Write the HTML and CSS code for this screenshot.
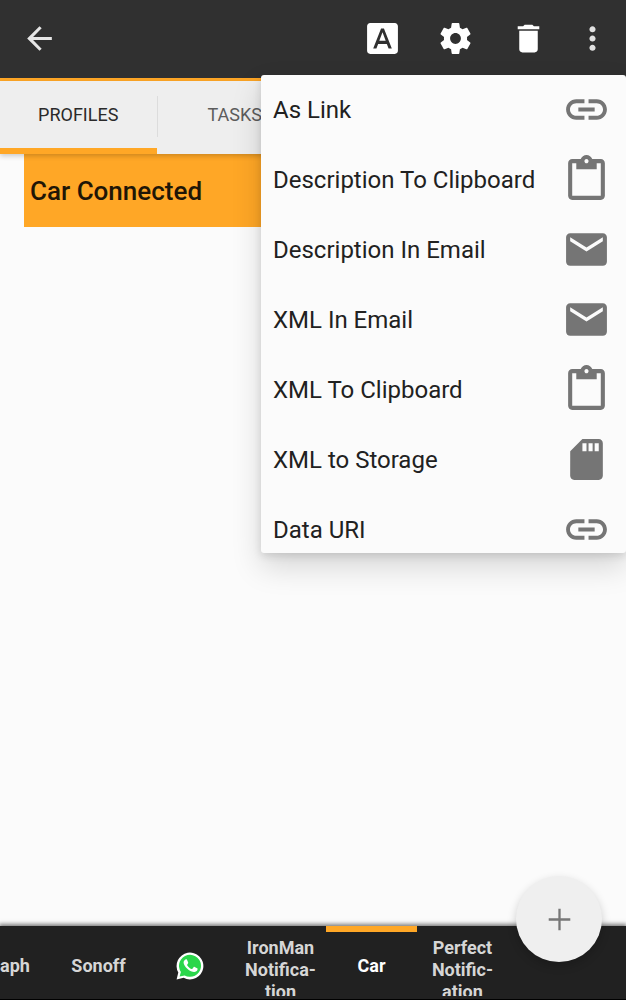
FILE: index.html
```html
<!DOCTYPE html>
<html lang="en">
<head>
<meta charset="utf-8">
<meta name="viewport" content="width=device-width, initial-scale=1">
<title>Profiles</title>
<link rel="stylesheet" href="styles.css">
</head>
<body>
<svg class="defs" aria-hidden="true">
  <symbol id="link" viewBox="0 0 24 24"><path d="M3.9 12c0-1.71 1.39-3.1 3.1-3.1h4V7H7c-2.76 0-5 2.24-5 5s2.24 5 5 5h4v-1.9H7c-1.71 0-3.1-1.39-3.1-3.1zM8 13h8v-2H8v2zm9-6h-4v1.9h4c1.71 0 3.1 1.39 3.1 3.1s-1.39 3.1-3.1 3.1h-4V17h4c2.76 0 5-2.24 5-5s-2.24-5-5-5z"/></symbol>
  <symbol id="clipboard" viewBox="0 0 24 24"><path d="M19 2h-4.18C14.4.84 13.3 0 12 0c-1.3 0-2.4.84-2.82 2H5c-1.1 0-2 .9-2 2v16c0 1.1.9 2 2 2h14c1.1 0 2-.9 2-2V4c0-1.1-.9-2-2-2zm-7 0c.55 0 1 .45 1 1s-.45 1-1 1-1-.45-1-1 .45-1 1-1zm7 18H5V4h2v3h10V4h2v16z"/></symbol>
  <symbol id="mail" viewBox="0 0 24 24"><path d="M20 4H4c-1.1 0-2 .9-2 2v12c0 1.1.9 2 2 2h16c1.1 0 2-.9 2-2V6c0-1.1-.9-2-2-2zm0 4l-8 5-8-5V6l8 5 8-5v2z"/></symbol>
  <symbol id="card" viewBox="0 0 24 24"><path d="M18 2h-8L4.020 8 4 20c0 1.100.9 2 2 2h12c1.100 0 2-.9 2-2V4c0-1.100-.9-2-2-2zm-6 6h-2V4h2v4zm3 0h-2V4h2v4zm3 0h-2V4h2v4z"/></symbol>
</svg>
<div class="app">
  <header class="toolbar">
    <button class="tool back" aria-label="Back"><svg viewBox="0 0 24 24"><path d="M20 11H7.830l5.590-5.590L12 4l-8 8 8 8 1.410-1.410L7.830 13H20v-2z"/></svg></button>
    <button class="tool" aria-label="Rename"><svg viewBox="0 0 24 24"><path d="M9.930 13.500h4.140L12 7.980 9.930 13.500zM20 2H4c-1.100 0-2 .9-2 2v16c0 1.100.9 2 2 2h16c1.100 0 2-.9 2-2V4c0-1.100-.9-2-2-2zm-4.050 16.500l-1.140-3H9.170l-1.120 3H5.960l5.110-13h1.860l5.110 13h-2.090z"/></svg></button>
    <button class="tool" aria-label="Settings"><svg viewBox="0 0 24 24"><path d="M19.430 12.980c.04-.32.07-.64.07-.98s-.03-.66-.07-.98l2.110-1.650c.19-.15.24-.42.12-.64l-2-3.460c-.12-.22-.39-.3-.61-.22l-2.490 1c-.52-.4-1.080-.73-1.690-.98l-.38-2.650C14.460 2.180 14.250 2 14 2h-4c-.25 0-.46.18-.49.42l-.38 2.650c-.61.25-1.170.59-1.690.98l-2.490-1c-.23-.09-.49 0-.61.22l-2 3.460c-.13.22-.07.49.12.64l2.110 1.650c-.04.32-.07.65-.07.98s.03.66.07.98l-2.110 1.650c-.19.15-.24.42-.12.64l2 3.460c.12.22.39.3.61.22l2.490-1c.52.4 1.080.73 1.690.98l.38 2.650c.03.24.24.42.49.42h4c.25 0 .46-.18.49-.42l.38-2.650c.61-.25 1.170-.59 1.690-.98l2.490 1c.23.09.49 0 .61-.22l2-3.460c.12-.22.07-.49-.12-.64l-2.110-1.650zM12 15.500c-1.930 0-3.500-1.570-3.500-3.500s1.570-3.500 3.500-3.500 3.500 1.570 3.500 3.500-1.570 3.500-3.500 3.500z"/></svg></button>
    <button class="tool" aria-label="Delete"><svg viewBox="0 0 24 24"><path d="M6 19c0 1.100.9 2 2 2h8c1.100 0 2-.9 2-2V7H6v12zM19 4h-3.500l-1-1h-5l-1 1H5v2h14V4z"/></svg></button>
    <button class="tool more" aria-label="More options"><svg viewBox="0 0 24 24"><path d="M12 8c1.100 0 2-.9 2-2s-.9-2-2-2-2 .9-2 2 .9 2 2 2zm0 2c-1.100 0-2 .9-2 2s.9 2 2 2 2-.9 2-2-.9-2-2-2zm0 6c-1.100 0-2 .9-2 2s.9 2 2 2 2-.9 2-2-.9-2-2-2z"/></svg></button>
  </header>
  <nav class="tabs">
    <button class="tab active">PROFILES</button>
    <button class="tab">TASKS</button>
  </nav>
  <main class="list">
    <button class="profile">Car Connected</button>
  </main>
  <footer class="projects">
    <button class="project first">aph</button>
    <button class="project">Sonoff</button>
    <button class="project" aria-label="WhatsApp"><svg class="wa" viewBox="0 0 28 28"><path fill="#fff" d="M.6 27.600 2.300 20.600A13.400 13.400 0 1 1 7.600 25.800Z"/><path fill="#2bd64b" d="M3.600 24.600 4.900 20A11 11 0 1 1 8.600 23.400Z"/><path fill="#fff" d="M9.500 7.400c.5-.2 1.200-.2 1.500.4l1.200 2.800c.2.500-.1.900-.9 1.900-.3.300-.2.600 0 .9 1 1.600 2.400 2.800 4.200 3.500.4.200.6.100.9-.2l1.200-1.500c.3-.4.600-.4 1-.2l2.500 1.200c.5.200.6.400.5 1-.2 1.700-1.900 2.800-3.500 2.800-1.700 0-4.500-1.100-6.800-3.200-2.200-2-3.700-4.400-3.700-6.200 0-1.500.9-2.800 1.900-3.200Z"/></svg></button>
    <button class="project long">IronMan<br>Notifica-<br>tion</button>
    <button class="project active">Car</button>
    <button class="project long">Perfect<br>Notific-<br>ation</button>
  </footer>
  <button class="fab" aria-label="Add profile"><svg viewBox="0 0 24 24"><path d="M19 12.750h-6.250V19h-1.500v-6.250H5v-1.500h6.250V5h1.500v6.250H19z"/></svg></button>
  <div class="menu" role="menu">
    <button class="item" role="menuitem">As Link<svg><use href="#link"/></svg></button>
    <button class="item" role="menuitem">Description To Clipboard<svg><use href="#clipboard"/></svg></button>
    <button class="item" role="menuitem">Description In Email<svg><use href="#mail"/></svg></button>
    <button class="item" role="menuitem">XML In Email<svg><use href="#mail"/></svg></button>
    <button class="item" role="menuitem">XML To Clipboard<svg><use href="#clipboard"/></svg></button>
    <button class="item" role="menuitem">XML to Storage<svg><use href="#card"/></svg></button>
    <button class="item last" role="menuitem">Data URI<svg><use href="#link"/></svg></button>
  </div>
</div>
</body>
</html>
```
FILE: styles.css
```css
* { box-sizing: border-box; }
body { margin: 0; font-family: Roboto, "Liberation Sans", sans-serif; background: #fbfbfb; }
button { border: 0; margin: 0; padding: 0; background: none; font: inherit; color: inherit; cursor: pointer; }
svg { display: block; fill: currentColor; }
.defs { position: absolute; width: 0; height: 0; }

.app { position: relative; display: flex; flex-direction: column; height: 100vh; overflow: hidden; }

.toolbar { display: flex; align-items: center; gap: 36px; height: 81px; padding: 0 15px 2px 21px; background: #303030; border-bottom: 3px solid #ffa726; color: #fff; flex: none; }
.tool svg { width: 37px; height: 37px; }
.back { margin-right: auto; color: #e6e6e6; }
.more { margin-left: -9px; color: #e0e0e0; }

.tabs { position: relative; display: flex; height: 73px; flex: none; background: #eee; box-shadow: 0 2px 5px rgba(0, 0, 0, 0.2); }
.tab { position: relative; width: 25%; font-size: 18px; color: #5c5c5c; border-bottom: 6px solid transparent; }
.tab.active { color: #2a2a2a; border-color: #ffa726; }
.tab + .tab::before { content: ""; position: absolute; left: 0; top: 15px; width: 1px; height: 41px; background: #dcdcdc; }

.list { flex: 1; padding-left: 24px; }
.profile { display: block; width: 100%; height: 73px; padding-left: 6px; background: #ffa726; color: #1f1606; font-size: 26px; font-weight: 500; text-align: left; }

.projects { display: flex; flex: none; height: 74px; padding-bottom: 3px; background: #212121; border-bottom: 1px solid #000; box-shadow: 0 -1px 4px 1px rgba(0, 0, 0, 0.5); color: #d6d6d6; font-size: 18px; font-weight: 700; line-height: 22px; }
.project { flex: none; width: 91px; display: flex; align-items: center; justify-content: center; text-align: center; padding-top: 9px; overflow: hidden; }
.project.first { width: 53px; justify-content: flex-start; }
.project.long { align-items: flex-start; padding-top: 11px; }
.project.active { color: #fff; padding-top: 3px; border-top: 6px solid #ffa726; }
.wa { width: 28px; height: 28px; }

.fab { position: absolute; right: 24px; bottom: 38px; width: 86px; height: 86px; border-radius: 50%; background: #efefef; color: #777; box-shadow: 0 4px 10px rgba(0, 0, 0, 0.2); display: flex; align-items: center; justify-content: center; }
.fab svg { width: 37px; height: 37px; }

.menu { position: absolute; top: 75px; right: 0; width: 365px; background: #fbfbfb; border-radius: 3px; overflow: hidden; box-shadow: 0 14px 30px rgba(0, 0, 0, 0.15), 0 3px 8px rgba(0, 0, 0, 0.12); }
.item { display: flex; align-items: center; justify-content: space-between; width: 100%; height: 70px; padding: 0 15px 0 12px; font-size: 24px; color: #212121; text-align: left; }
.item.last { height: 58px; padding-top: 12px; }
.item svg { width: 49px; height: 49px; margin-bottom: 2px; color: #757575; }
```
